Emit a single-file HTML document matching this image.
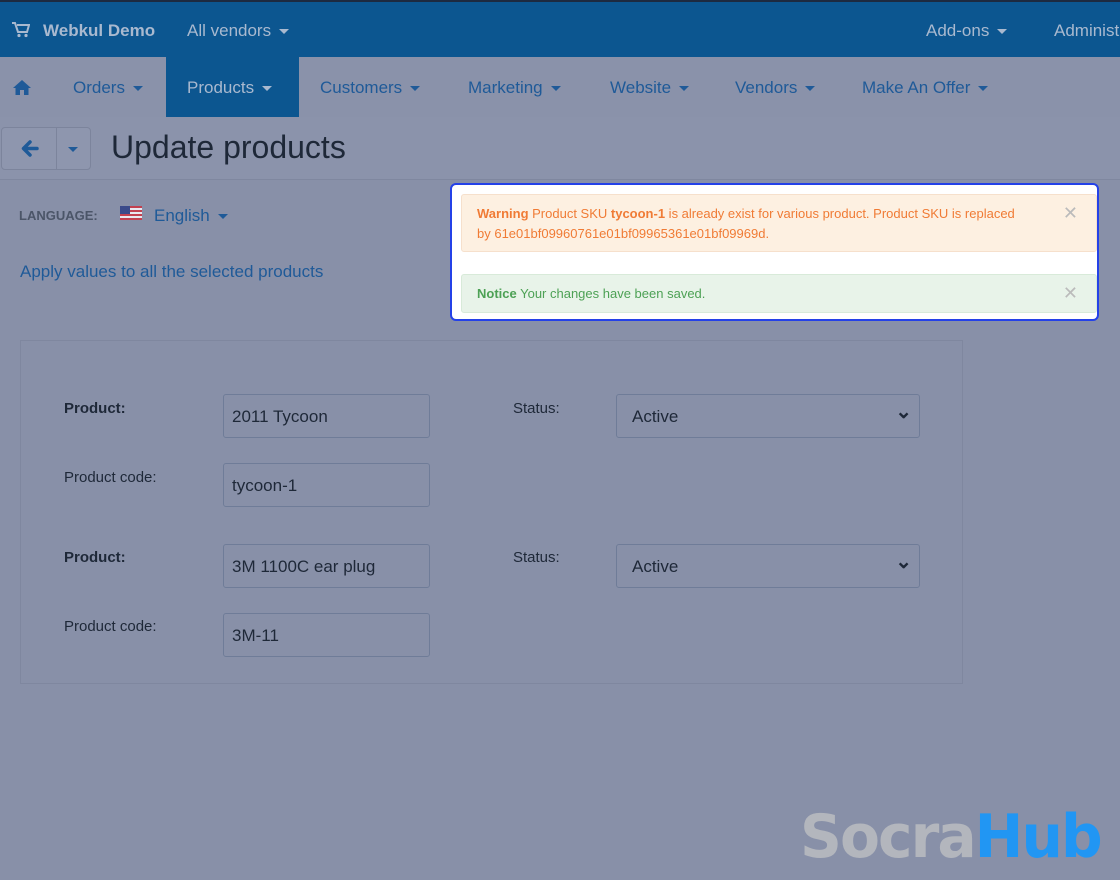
<!DOCTYPE html>
<html><head><meta charset="utf-8"><style>
*{box-sizing:border-box;margin:0;padding:0}
body{width:1120px;height:880px;overflow:hidden;background:#8890a8;font-family:"Liberation Sans",sans-serif;position:relative}
.top{position:absolute;left:0;top:0;width:1120px;height:57px;background:#0c5690;border-top:2px solid #1d2a40;color:#a9b9cf;font-size:17px}
.top span{position:absolute;top:19px}
.car{display:inline-block;width:0;height:0;border-left:5px solid transparent;border-right:5px solid transparent;border-top:5px solid currentColor;vertical-align:middle;margin-left:8px}
.nav{position:absolute;top:57px;left:0;width:1120px;height:60px;background:#8a92aa;font-size:17px;color:#1f5a98}
.nav span{position:absolute;top:21px}
.nav .act{position:absolute;left:166px;top:0;width:133px;height:60px;background:#0c5690;color:#a9b9cf;padding:21px 0 0 21px}
.tbar{position:absolute;top:117px;left:0;width:1120px;height:63px;background:#8b93ab;border-bottom:1px solid #7f879f}
.btn{position:absolute;left:1px;top:10px;width:90px;height:43px;border:1px solid #7c849c;border-radius:4px;background:#8e96ae}
.btn i{position:absolute;left:54px;top:0;width:1px;height:41px;background:#7c849c}
h1{position:absolute;left:111px;top:12px;font-size:32px;font-weight:normal;color:#1e2838}
.lbl{position:absolute;font-size:15px;color:#1e2838}
.inp{position:absolute;width:207px;height:44px;border:1px solid #6f7c98;border-radius:3px;padding:12px 8px;font-size:17px;color:#1e2838}
.sel{position:absolute;left:616px;width:304px;height:44px;border:1px solid #6f7c98;border-radius:3px;padding:12px 15px;font-size:17px;color:#1e2838}
.sel:after{content:"⌄";position:absolute;right:7px;top:4px;font-size:20px;font-weight:bold}
.pop{position:absolute;left:450px;top:183px;width:649px;height:138px;background:#fff;border:2px solid #2441e8;border-radius:6px}
.warn{position:absolute;left:9px;top:9px;width:636px;height:58px;background:#fdf0e1;border:1px solid #f6e0cc;border-radius:3px;color:#f07b35;font-size:13px;line-height:20px;padding:9px 15px}
.note{position:absolute;left:9px;top:89px;width:636px;height:39px;background:#e8f3e9;border:1px solid #d8ead9;border-radius:3px;color:#4da155;font-size:13px;padding:11px 15px}
.x{position:absolute;right:18px;color:#bbb;font-size:18px}
</style></head><body>
<div class="top">
<svg style="position:absolute;left:12px;top:20px" width="18" height="16" viewBox="0 0 18 16"><path d="M0 1h3l3 9h9l2-7H5" fill="none" stroke="#a9b9cf" stroke-width="2"/><circle cx="7" cy="13.5" r="1.6" fill="#a9b9cf"/><circle cx="14" cy="13.5" r="1.6" fill="#a9b9cf"/></svg>
<span style="left:43px;font-weight:bold">Webkul Demo</span>
<span style="left:187px">All vendors<i class="car"></i></span>
<span style="left:926px">Add-ons<i class="car"></i></span>
<span style="left:1054px">Administ</span>
</div>
<div class="nav">
<svg style="position:absolute;left:13px;top:23px" width="18" height="15" viewBox="0 0 18 15"><path d="M9 0L0 8h2.5v7h4.5v-5h4v5h4.5V8H18z" fill="#1f5a98"/></svg>
<span style="left:73px">Orders<i class="car"></i></span>
<div class="act">Products<i class="car"></i></div>
<span style="left:320px">Customers<i class="car"></i></span>
<span style="left:468px">Marketing<i class="car"></i></span>
<span style="left:610px">Website<i class="car"></i></span>
<span style="left:735px">Vendors<i class="car"></i></span>
<span style="left:862px">Make An Offer<i class="car"></i></span>
</div>
<div class="tbar">
<div class="btn">
<svg style="position:absolute;left:19px;top:12px" width="18" height="17" viewBox="0 0 18 17"><path d="M16 8.5H3M9 2L2.5 8.5 9 15" fill="none" stroke="#1f5a98" stroke-width="3.5" stroke-linecap="round" stroke-linejoin="round"/></svg>
<i></i>
<div style="position:absolute;left:66px;top:19px;width:0;height:0;border-left:5px solid transparent;border-right:5px solid transparent;border-top:5px solid #1f5a98"></div>
</div>
<h1>Update products</h1>
</div>
<div class="lbl" style="left:19px;top:208px;font-size:13px;font-weight:bold;color:#4b5568">LANGUAGE:</div>
<div style="position:absolute;left:120px;top:206px;width:22px;height:14px;background:repeating-linear-gradient(#c24050 0 2px,#e8e8f0 2px 4px)"><div style="width:10px;height:8px;background:#3a4a8a"></div></div>
<div class="lbl" style="left:154px;top:206px;font-size:17px;color:#1f5a98">English<i class="car"></i></div>
<div class="lbl" style="left:20px;top:262px;font-size:17px;color:#1f5a98">Apply values to all the selected products</div>
<div style="position:absolute;left:20px;top:340px;width:943px;height:344px;border:1px solid #7f879f"></div>
<div class="lbl" style="left:64px;top:400px;font-weight:bold">Product:</div>
<div class="inp" style="left:223px;top:394px">2011 Tycoon</div>
<div class="lbl" style="left:513px;top:400px">Status:</div>
<div class="sel" style="top:394px">Active</div>
<div class="lbl" style="left:64px;top:469px">Product code:</div>
<div class="inp" style="left:223px;top:463px">tycoon-1</div>
<div class="lbl" style="left:64px;top:549px;font-weight:bold">Product:</div>
<div class="inp" style="left:223px;top:544px">3M 1100C ear plug</div>
<div class="lbl" style="left:513px;top:549px">Status:</div>
<div class="sel" style="top:544px">Active</div>
<div class="lbl" style="left:64px;top:618px">Product code:</div>
<div class="inp" style="left:223px;top:613px">3M-11</div>
<div class="pop">
<div class="warn"><b>Warning</b> Product SKU <b>tycoon-1</b> is already exist for various product. Product SKU is replaced<br>by 61e01bf09960761e01bf09965361e01bf09969d.<span class="x" style="top:8px">✕</span></div>
<div class="note"><b>Notice</b> Your changes have been saved.<span class="x" style="top:8px">✕</span></div>
</div>
<div style="position:absolute;left:800px;top:802px;font-size:60px;font-weight:bold;font-family:'DejaVu Sans',sans-serif;color:#b3b6bd;letter-spacing:-2px;transform:scaleX(0.97);transform-origin:left">Socra<span style="color:#2196f3">Hub</span></div>
</body></html>
